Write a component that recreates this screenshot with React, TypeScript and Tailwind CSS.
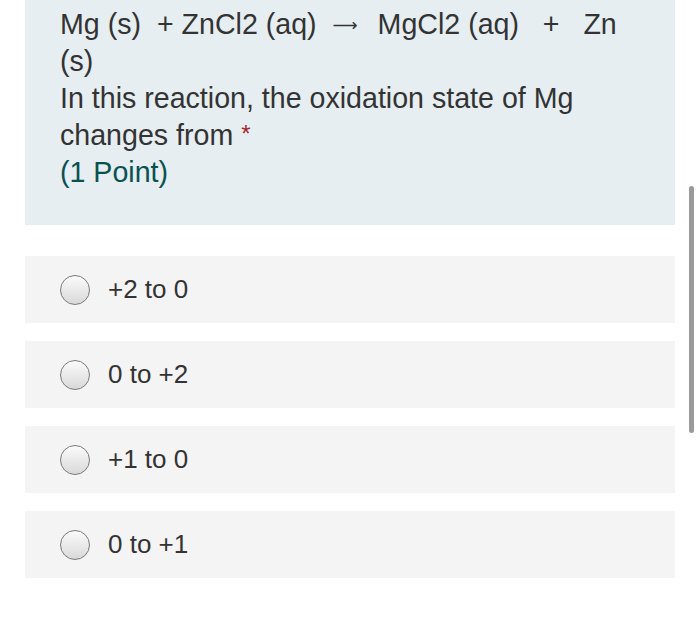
import React from 'react';

const options = ['+2 to 0', '0 to +2', '+1 to 0', '0 to +1'];

function Radio() {
    return (
        <span className="block h-[30px] w-[30px] shrink-0 rounded-full border-[1.5px] border-[#7a7a7a] bg-gradient-to-b from-[#fbfbfb] to-[#d9d9d9]" />
    );
}

export default function App() {
    return (
        <div
            className="min-h-[624px] w-[700px] bg-white"
            style={{ fontFamily: '"Liberation Sans", Arial, sans-serif' }}
        >
            <div className="flex">
                <div className="w-[675px] pl-[25px]">
                    {/* Question header */}
                    <div className="bg-[#e6eef1] pb-[34px] pl-[35px] pr-4 pt-[6px] text-[28.6px] leading-[37px] text-[#333333]">
                        <p className="whitespace-pre">
                            {'Mg (s)  + ZnCl2 (aq) '}
                            <span
                                className="ml-[8px] mr-[12px] inline-block align-[3px] text-[17.5px] leading-none"
                                style={{ fontFamily: '"DejaVu Sans", sans-serif' }}
                            >
                                ⟶
                            </span>
                            {' MgCl2 (aq)   +   Zn'}
                        </p>
                        <p>(s)</p>
                        <p>In this reaction, the oxidation state of Mg</p>
                        <p>
                            changes from{' '}
                            <span className="inline-block align-[3px] text-[24px] leading-none text-[#a4262c]">
                                *
                            </span>
                        </p>
                        <p className="text-[#0b5150]">(1 Point)</p>
                    </div>

                    {/* Choices */}
                    <div className="mt-[31px] flex flex-col gap-[18px]">
                        {options.map((opt) => (
                            <div
                                key={opt}
                                className="flex h-[67px] items-center gap-[18px] bg-[#f4f4f4] pl-[35px]"
                            >
                                <Radio />
                                <span className="text-[26px] text-[#333333]">{opt}</span>
                            </div>
                        ))}
                    </div>
                </div>

                {/* Scrollbar */}
                <div className="ml-[14px] mt-[186px] h-[247px] w-[5px] rounded-full bg-[#9a9a9a]" />
            </div>
        </div>
    );
}
